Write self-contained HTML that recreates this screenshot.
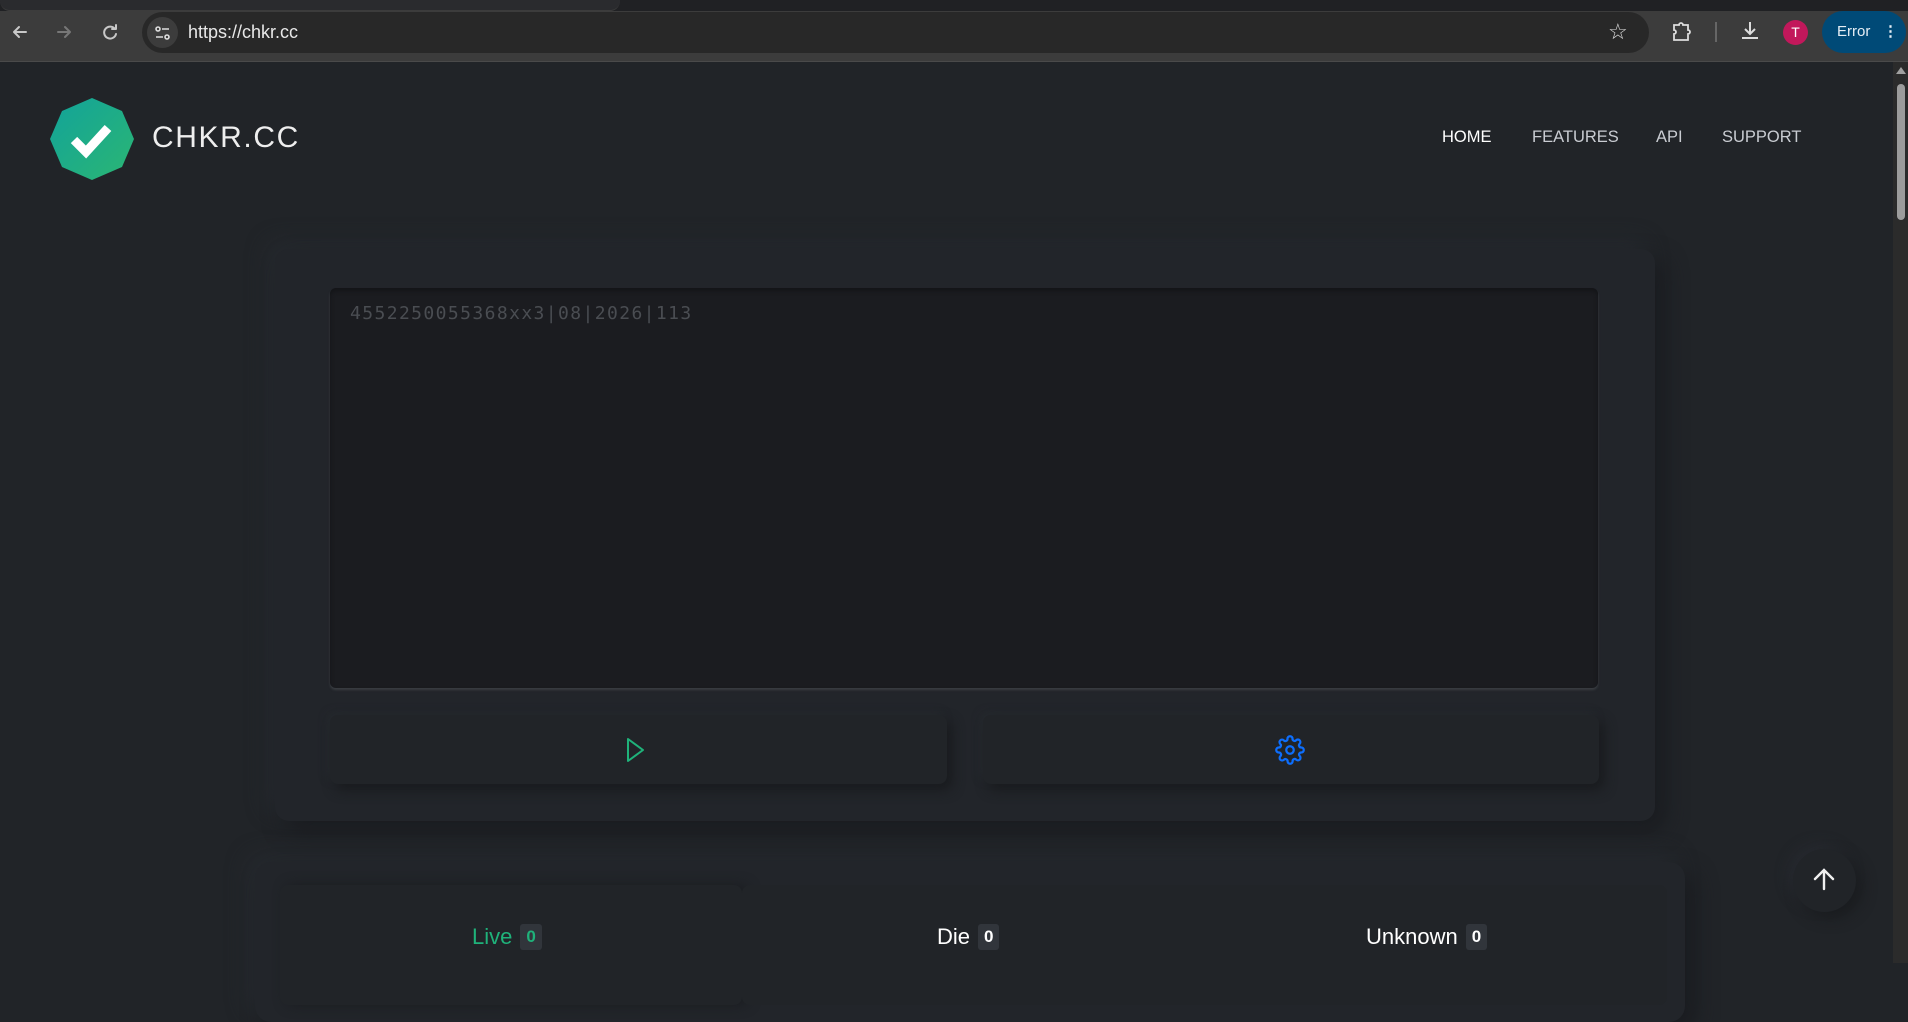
<!DOCTYPE html>
<html><head><meta charset="utf-8"><style>
*{margin:0;padding:0;box-sizing:border-box}
body{width:1908px;height:963px;overflow:hidden;background:#212428;font-family:"Liberation Sans",sans-serif;position:relative}
.abs{position:absolute}
.badge{display:inline-block;background:#31353b;font-size:17px;font-weight:bold;padding:3px 6px;border-radius:3px;vertical-align:2px;margin-left:8px}
</style></head><body>
<div class="abs" style="left:0;top:0;width:1908px;height:11px;background:#202124"></div>
<div class="abs" style="left:0;top:0;width:620px;height:11px;background:#2a2b2e;border-radius:0 0 10px 10px;border-bottom:1px solid #3c3c3c"></div>
<div class="abs" style="left:0;top:11px;width:1908px;height:50px;background:#3c3c3c"></div>
<div class="abs" style="left:0;top:61px;width:1908px;height:1px;background:#4a4a4a"></div>
<svg class="abs" style="left:8px;top:20px" width="120" height="24" viewBox="0 0 120 24" fill="none" stroke-width="2" stroke-linecap="round" stroke-linejoin="round">
<path d="M18 12H6M11 7l-5 5 5 5" stroke="#c8c8c8"/>
<path d="M50 12h12M57 7l5 5-5 5" stroke="#777"/>
<path d="M107 9a6 6 0 1 0 1 5M108 5v4h-4" stroke="#c8c8c8"/>
</svg>
<div class="abs" style="left:142px;top:12px;width:1507px;height:41px;background:#282828;border-radius:21px"></div>
<div class="abs" style="left:147px;top:17px;width:31px;height:31px;background:#3c3c3c;border-radius:50%"></div>
<svg class="abs" style="left:153px;top:23px" width="20" height="20" viewBox="0 0 20 20" fill="none" stroke="#ddd" stroke-width="1.6"><circle cx="5" cy="6" r="2"/><path d="M9 6h7M3 14h7"/><circle cx="14" cy="14" r="2"/></svg>
<div class="abs" style="left:188px;top:22px;font-size:18px;color:#e8e8e8">https://chkr.cc</div>
<div class="abs" style="left:1608px;top:19px;font-size:22px;color:#ddd">☆</div>
<svg class="abs" style="left:1670px;top:20px" width="22" height="24" viewBox="0 0 22 24" fill="none" stroke="#ddd" stroke-width="1.8"><path d="M4 5h5a2 2 0 0 1 4 0h5v5a2 2 0 0 1 0 4v6H4v-6a2 2 0 0 0 0-4z"/></svg>
<div class="abs" style="left:1715px;top:22px;width:2px;height:20px;background:#666"></div>
<svg class="abs" style="left:1738px;top:19px" width="24" height="24" viewBox="0 0 24 24" fill="none" stroke="#ddd" stroke-width="2"><path d="M12 3v11M7 10l5 5 5-5M4 19h16"/></svg>
<div class="abs" style="left:1783px;top:20px;width:25px;height:25px;background:#c2185b;border-radius:50%;color:#fff;font-size:14px;text-align:center;line-height:25px">T</div>
<div class="abs" style="left:1822px;top:11px;width:84px;height:42px;background:#004a77;border-radius:21px;color:#e6eef5;font-size:15px;line-height:42px;padding-left:15px">Error <span style="position:absolute;left:61px;top:0;font-weight:bold">⋮</span></div>

<div class="abs" style="left:1893px;top:62px;width:15px;height:901px;background:#2b2b2b"></div>
<div class="abs" style="left:1896px;top:67px;width:0;height:0;border-left:5px solid transparent;border-right:5px solid transparent;border-bottom:7px solid #a0a0a0"></div>
<div class="abs" style="left:1897px;top:84px;width:8px;height:136px;background:#9c9c9c;border-radius:4px"></div>

<svg class="abs" style="left:50px;top:98px" width="84" height="82" viewBox="0 0 84 82">
<defs><linearGradient id="g" x1="0" y1="0" x2="1" y2="1"><stop offset="0" stop-color="#12a39a"/><stop offset="1" stop-color="#2bb673"/></linearGradient></defs>
<polygon points="42,0 72,13 84,41 72,69 42,82 12,69 0,41 12,13" fill="url(#g)"/>
<path d="M24 42l12 12 22-24" fill="none" stroke="#fff" stroke-width="9" stroke-linejoin="miter"/>
</svg>
<div class="abs" style="left:152px;top:121px;font-size:30px;color:#eee;letter-spacing:1.6px">CHKR.CC</div>
<div class="abs" style="left:1442px;top:128px;font-size:16.5px;color:#fff">HOME</div>
<div class="abs" style="left:1532px;top:128px;font-size:16.5px;color:#c9ccd2">FEATURES</div>
<div class="abs" style="left:1656px;top:128px;font-size:16.5px;color:#c9ccd2">API</div>
<div class="abs" style="left:1722px;top:128px;font-size:16.5px;color:#c9ccd2">SUPPORT</div>

<div class="abs" style="left:275px;top:249px;width:1380px;height:572px;background:#22252a;border-radius:14px;box-shadow:10px 10px 22px #1a1c20,-8px -8px 20px #262a2f"></div>
<div class="abs" style="left:330px;top:288px;width:1268px;height:400px;background:#1b1c20;border-radius:6px;box-shadow:inset 0 3px 4px #141518,0 2px 2px #3a3d42"></div>
<div class="abs" style="left:350px;top:303px;font-family:'DejaVu Sans Mono','Liberation Mono',monospace;font-size:18px;letter-spacing:1.4px;color:#4a4d52">4552250055368xx3|08|2026|113</div>
<div class="abs" style="left:330px;top:715px;width:617px;height:69px;background:#212428;border-radius:8px;box-shadow:5px 6px 12px #191b1e,-3px -3px 8px #262a2f"></div>
<div class="abs" style="left:983px;top:715px;width:616px;height:69px;background:#212428;border-radius:8px;box-shadow:5px 6px 12px #191b1e,-3px -3px 8px #262a2f"></div>
<svg class="abs" style="left:624px;top:736px" width="24" height="28" viewBox="0 0 24 28" fill="none" stroke="#1fb27a" stroke-width="2" stroke-linejoin="round"><path d="M4 3v22l15-11z"/></svg>
<svg class="abs" style="left:1275px;top:735px" width="30" height="30" viewBox="0 0 24 24" fill="none" stroke="#0d6efd" stroke-width="1.8" stroke-linecap="round" stroke-linejoin="round"><circle cx="12" cy="12" r="3"/><path d="M19.4 15a1.65 1.65 0 0 0 .33 1.82l.06.06a2 2 0 0 1-2.830 2.83l-.06-.06a1.65 1.65 0 0 0-1.82-.33 1.65 1.65 0 0 0-1 1.51V21a2 2 0 0 1-4 0v-.09A1.650 1.65 0 0 0 9 19.4a1.65 1.65 0 0 0-1.82.33l-.06.06a2 2 0 0 1-2.83-2.83l.06-.06A1.65 1.65 0 0 0 4.68 15a1.65 1.65 0 0 0-1.51-1H3a2 2 0 0 1 0-4h.09A1.65 1.65 0 0 0 4.6 9a1.65 1.65 0 0 0-.33-1.82l-.06-.06a2 2 0 0 1 2.83-2.83l.06.06A1.65 1.65 0 0 0 9 4.68a1.65 1.65 0 0 0 1-1.51V3a2 2 0 0 1 4 0v.09a1.650 1.65 0 0 0 1 1.51 1.65 1.65 0 0 0 1.82-.33l.06-.06a2 2 0 0 1 2.83 2.83l-.06.06A1.65 1.65 0 0 0 19.4 9a1.65 1.65 0 0 0 1.51 1H21a2 2 0 0 1 0 4h-.09a1.65 1.65 0 0 0-1.51 1z"/></svg>

<div class="abs" style="left:255px;top:862px;width:1430px;height:160px;background:#22252a;border-radius:16px;box-shadow:10px 10px 22px #1a1c20,-8px -8px 20px #262a2f"></div>
<div class="abs" style="left:280px;top:885px;width:462px;height:120px;background:#212428;border-radius:8px;box-shadow:6px 0 12px #1b1d21"></div>
<div class="abs" style="left:742px;top:885px;width:925px;height:120px;background:#212428;border-radius:8px"></div>
<div class="abs" style="left:472px;top:924px;font-size:22px;color:#1fb27a">Live<span class="badge" style="color:#1fb27a">0</span></div>
<div class="abs" style="left:937px;top:924px;font-size:22px;color:#fff">Die<span class="badge" style="color:#fff">0</span></div>
<div class="abs" style="left:1366px;top:924px;font-size:22px;color:#fff">Unknown<span class="badge" style="color:#fff">0</span></div>

<div class="abs" style="left:1793px;top:849px;width:63px;height:63px;border-radius:50%;background:#212428;box-shadow:6px 6px 14px #1a1c1f,-5px -5px 12px #272a30"></div>
<svg class="abs" style="left:1810px;top:865px" width="28" height="28" viewBox="0 0 28 28" fill="none" stroke="#f0f0f0" stroke-width="2.4" stroke-linecap="round"><path d="M14 24V5M5 14l9-9 9 9"/></svg>
</body></html>
